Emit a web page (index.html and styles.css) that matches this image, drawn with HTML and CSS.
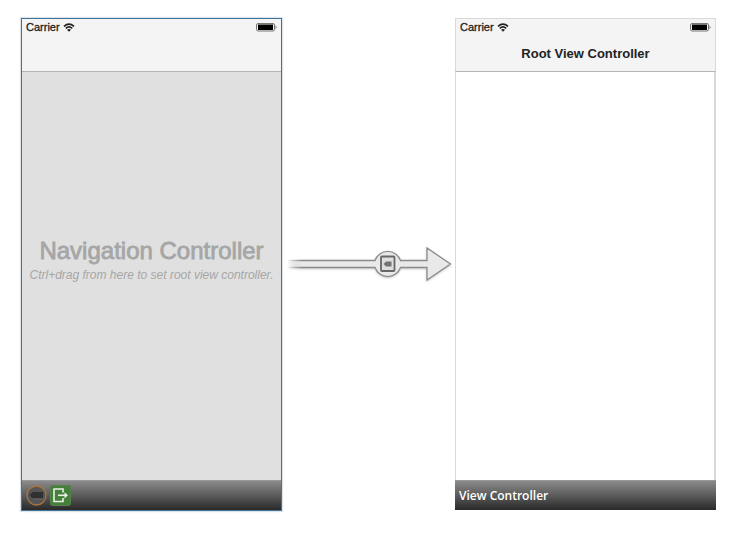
FILE: index.html
```
<!DOCTYPE html>
<html lang="en">
<head>
<meta charset="utf-8">
<title>Storyboard</title>
<link rel="stylesheet" href="styles.css">
</head>
<body>
<main class="canvas">
  <section class="scene selected">
    <header class="navbar">
      <div class="status">
        <span>Carrier</span>
        <svg class="wifi" viewBox="0 0 12 9" aria-hidden="true"><path d="M1 3.3Q6-1 11 3.3M2.8 5.3Q6 2.5 9.2 5.3" /><path class="dot" d="M4 6.8Q6 5.2 8 6.8L6 8.8Z" /></svg>
        <svg class="battery" viewBox="0 0 21 9" aria-hidden="true"><rect class="case" x="0.5" y="0.5" width="18" height="7.5" rx="1.5" /><rect x="2" y="1.5" width="15" height="5.5" /><path class="cap" d="M19.500 2.200Q21.500 4.200 19.500 6.300Z" /></svg>
      </div>
    </header>
    <div class="content placeholder">
      <h1>Navigation Controller</h1>
      <p>Ctrl+drag from here to set root view controller.</p>
    </div>
    <footer class="dock">
      <svg class="dock-icon" viewBox="0 0 21 21" role="img" aria-label="Navigation Controller"><circle cx="10.5" cy="10.5" r="9.5" fill="#555" stroke="#a7753f" stroke-width="1.3" /><path d="M3.5 10L7 7H17V13.5H7.5Q5 13 3.5 10Z" fill="#303030" /><path d="M7 14H17" stroke="#6b6b6b" /></svg>
      <svg class="dock-icon" viewBox="0 0 21 21" role="img" aria-label="Exit"><rect x="0.5" y="0.5" width="20" height="20" rx="2" fill="#44803a" stroke="#55814a" /><path d="M13 7.5V4H4V16.5H13V13" fill="none" stroke="#e9efe5" stroke-width="1.6" /><path d="M8 10.3H16" stroke="#e9efe5" stroke-width="1.6" /><path d="M14.5 7.2L18 10.3L14.5 13.4Z" fill="#e9efe5" /></svg>
    </footer>
  </section>

  <svg class="segue" viewBox="0 0 173 40" role="img" aria-label="Root view controller segue">
    <defs>
      <linearGradient id="fade" gradientUnits="userSpaceOnUse" x1="5" y1="0" x2="20" y2="0"><stop offset="0" stop-color="#8b8b8b" stop-opacity="0" /><stop offset="1" stop-color="#8b8b8b" /></linearGradient>
      <linearGradient id="fill" gradientUnits="userSpaceOnUse" x1="5" y1="0" x2="20" y2="0"><stop offset="0" stop-color="#e9e9e9" stop-opacity="0" /><stop offset="1" stop-color="#e9e9e9" /></linearGradient>
    </defs>
    <path class="shadow" d="M6 15.500H93A13.500 13.500 0 0 1 118.500 15.500H145V3L168.500 19L145 35V22.500H118.500A13.500 13.500 0 0 1 93 22.500H6" fill="url(#fill)" stroke="url(#fade)" stroke-width="1.3" />
    <rect x="99" y="11.500" width="13.500" height="14.500" rx="1" fill="#dedede" stroke="#676767" stroke-width="1.800" />
    <path d="M101.500 19L104 16.500H109.500V21.500H104Z" fill="#737373" />
  </svg>

  <section class="scene">
    <header class="navbar">
      <div class="status">
        <span>Carrier</span>
        <svg class="wifi" viewBox="0 0 12 9" aria-hidden="true"><path d="M1 3.3Q6-1 11 3.3M2.8 5.3Q6 2.5 9.2 5.3" /><path class="dot" d="M4 6.8Q6 5.2 8 6.8L6 8.8Z" /></svg>
        <svg class="battery" viewBox="0 0 21 9" aria-hidden="true"><rect class="case" x="0.5" y="0.5" width="18" height="7.5" rx="1.5" /><rect x="2" y="1.5" width="15" height="5.5" /><path class="cap" d="M19.500 2.200Q21.500 4.200 19.500 6.300Z" /></svg>
      </div>
      <h2>Root View Controller</h2>
    </header>
    <div class="content"></div>
    <footer class="dock">View Controller</footer>
  </section>
</main>
</body>
</html>
```
FILE: styles.css
```
* {
  box-sizing: border-box;
}

body {
  margin: 0;
  background: #fff;
  color: #222;
  font-family: "Liberation Sans", Arial, sans-serif;
}

h1,
h2,
p {
  margin: 0;
}

.canvas {
  display: grid;
  grid-template-columns: 261fr 173fr 261fr;
  align-items: center;
  min-height: 100vh;
  padding: 18px 29px 28px 21px;
}

.scene {
  display: flex;
  flex-direction: column;
  align-self: stretch;
  border-top: 1px solid #d9d9d9;
}

.navbar {
  height: 53px;
  padding: 0 4px;
  border: solid #d9d9d9;
  border-width: 0 1px 1px;
  border-bottom-color: #b5b5b5;
  background: #f4f4f4;
}

.status {
  display: flex;
  align-items: center;
  height: 17px;
  font-size: 11px;
  line-height: 17px;
  -webkit-text-stroke: 0.3px #222;
}

.wifi {
  width: 12px;
  height: 9px;
  margin-left: 3px;
  fill: none;
  stroke: #222;
  stroke-width: 1.7;
}

.wifi .dot {
  fill: #222;
  stroke: none;
}

.battery {
  width: 21px;
  height: 9px;
  margin-left: auto;
}

.battery .case {
  fill: #eee;
  stroke: #777;
}

.battery .cap {
  fill: #777;
}

h2 {
  font-size: 13px;
  line-height: 35px;
  text-align: center;
}

.content {
  flex: 1;
  border: solid #d9d9d9;
  border-width: 0 2px 0 1px;
}

.placeholder {
  display: flex;
  flex-direction: column;
  align-items: center;
  justify-content: center;
  border: 0;
  background: #e0e0e0;
  color: #a6a6a6;
  white-space: nowrap;
}

.placeholder h1 {
  font-size: 24px;
  font-weight: 400;
  line-height: 28px;
  -webkit-text-stroke: 0.8px #a6a6a6;
}

.placeholder p {
  padding-bottom: 30px;
  font-size: 12px;
  font-style: italic;
  line-height: 20px;
}

.dock {
  display: flex;
  align-items: center;
  gap: 3px;
  height: 30px;
  margin-bottom: 1px;
  padding: 0 4px;
  border-top: 1px solid #999;
  background: linear-gradient(#8a8a8a, #5b5b5b 50%, #292929);
  color: #fff;
  font-family: "Open Sans", sans-serif;
  font-size: 12px;
  font-weight: 600;
}

.dock-icon {
  width: 21px;
  height: 21px;
}

.selected {
  border: 1px solid #42749a;
  box-shadow: 0 0 1px 1px #dde4e9;
}

.selected .navbar {
  border-width: 0 0 1px;
}

.selected .dock {
  margin-bottom: 0;
}

.segue {
  display: block;
  width: 100%;
}

.segue .shadow {
  filter: drop-shadow(0 1px 1px #cccccc);
}
```
